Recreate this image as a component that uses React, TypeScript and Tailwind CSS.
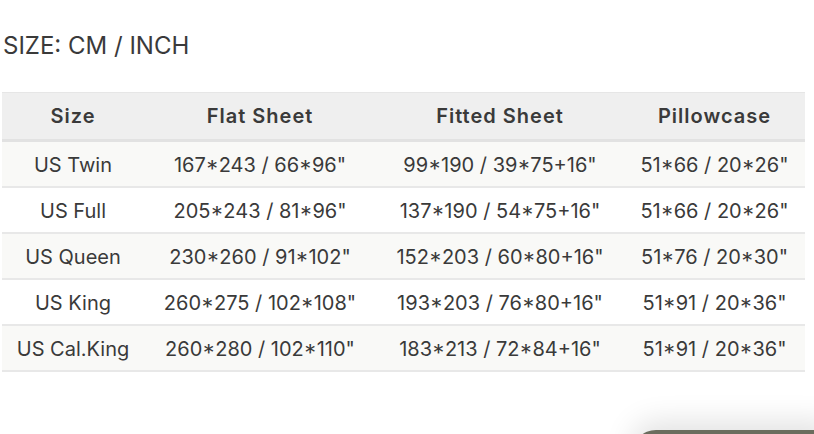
const rows = [
  ['US Twin', '167*243 / 66*96"', '99*190 / 39*75+16"', '51*66 / 20*26"'],
  ['US Full', '205*243 / 81*96"', '137*190 / 54*75+16"', '51*66 / 20*26"'],
  ['US Queen', '230*260 / 91*102"', '152*203 / 60*80+16"', '51*76 / 20*30"'],
  ['US King', '260*275 / 102*108"', '193*203 / 76*80+16"', '51*91 / 20*36"'],
  ['US Cal.King', '260*280 / 102*110"', '183*213 / 72*84+16"', '51*91 / 20*36"'],
]

export default function App() {
  return (
    <div
      className="relative w-[814px] h-[434px] overflow-hidden bg-white text-[#3a3a3a]"
      style={{ fontFamily: 'Inter, "Noto Sans", sans-serif' }}
    >
      <div className="pt-[31px] pl-[3px] text-[24px] leading-[30px]">SIZE: CM / INCH</div>

      <table className="mt-[31px] ml-[2px] w-[803px] border-collapse table-fixed text-[20px] whitespace-nowrap">
        <colgroup>
          <col className="w-[142px]" />
          <col className="w-[232px]" />
          <col className="w-[248px]" />
          <col className="w-[181px]" />
        </colgroup>
        <thead>
          <tr className="bg-[#efefef] border-t border-[#e6e6e6] border-b-[3px] border-b-[#e2e2e2]">
            <th className="h-[48px] p-0 text-center font-semibold tracking-[1px]">Size</th>
            <th className="p-0 text-center font-semibold tracking-[1px]">Flat Sheet</th>
            <th className="p-0 text-center font-semibold tracking-[1px]">Fitted Sheet</th>
            <th className="p-0 text-center font-semibold tracking-[1px]">Pillowcase</th>
          </tr>
        </thead>
        <tbody>
          {rows.map((r, i) => (
            <tr key={r[0]} className={`border-b-2 border-[#e8e8e8] ${i % 2 === 0 ? 'bg-[#f9f9f7]' : 'bg-white'}`}>
              <td className="h-[46px] p-0 pt-[3px] text-center">{r[0]}</td>
              <td className="p-0 pt-[3px] text-center">{r[1]}</td>
              <td className="p-0 pt-[3px] text-center">{r[2]}</td>
              <td className="p-0 pt-[3px] text-center">{r[3]}</td>
            </tr>
          ))}
        </tbody>
      </table>

      {/* chat widget peeking in at the bottom */}
      <div className="absolute left-[632px] top-[430px] w-[200px] h-[40px] rounded-tl-[24px] bg-[#6b6d5e] shadow-[0_-8px_30px_rgba(0,0,0,0.12)]" />
    </div>
  )
}
